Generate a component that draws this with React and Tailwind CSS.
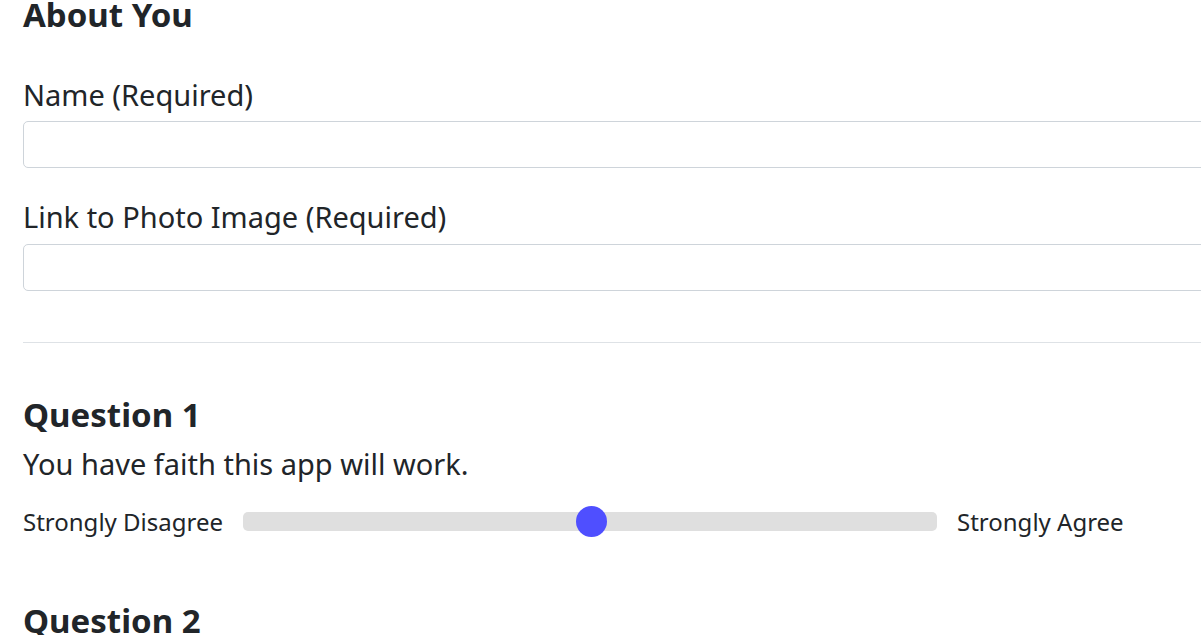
export default function App() {
  return (
    <div className="w-[1201px] h-[635px] overflow-hidden bg-white text-[#212529]" style={{ fontFamily: '"Noto Sans", "Open Sans", sans-serif' }}>
      <div className="pl-[23px] w-[1400px]">
        <h2 className="text-[33px] font-bold leading-[40px] mt-[-5px]">About You</h2>

        <div className="mt-[42px]">
          <label className="block text-[29px] leading-[36px]">Name (Required)</label>
          <input type="text" className="mt-[8px] block w-full h-[47px] border border-[#ced4da] rounded-[5px]" />
        </div>

        <div className="mt-[31px]">
          <label className="block text-[29px] leading-[36px]">Link to Photo Image (Required)</label>
          <input type="text" className="mt-[9px] block w-full h-[47px] border border-[#ced4da] rounded-[5px]" />
        </div>

        <hr className="mt-[51px] border-t border-[#dee2e6]" />

        <h3 className="mt-[52px] text-[33px] font-bold leading-[40px]">Question 1</h3>
        <p className="mt-[11px] text-[29px] leading-[36px]">You have faith this app will work.</p>

        <div className="mt-[24px] flex items-center h-[31px]">
          <span className="text-[24px] leading-[33px] w-[220px]">Strongly Disagree</span>
          <div className="relative w-[694px] h-[19px] bg-[#dfdfdf] rounded-[5px]">
            <div className="absolute left-[333px] top-[-6px] w-[31px] h-[31px] rounded-full bg-[#4f4fff]" />
          </div>
          <span className="ml-[20px] text-[24px] leading-[33px]">Strongly Agree</span>
        </div>

        <h3 className="mt-[64px] text-[33px] font-bold leading-[40px]">Question 2</h3>
      </div>
    </div>
  );
}
